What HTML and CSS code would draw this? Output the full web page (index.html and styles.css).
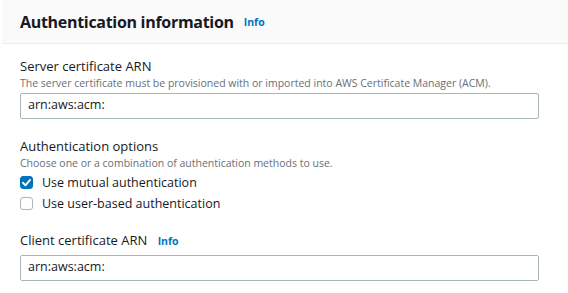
FILE: index.html
```html
<!DOCTYPE html>
<html>
<head>
<meta charset="utf-8">
<link rel="stylesheet" href="styles.css">
</head>
<body>
<div class="panel">
  <div class="header">
    <h2 class="title">Authentication information</h2>
    <a class="info">Info</a>
  </div>
  <div class="content">
    <div class="field">
      <div class="label">Server certificate ARN</div>
      <div class="desc">The server certificate must be provisioned with or imported into AWS Certificate Manager (ACM).</div>
      <div class="input">arn:aws:acm:</div>
    </div>
    <div class="field opts">
      <div class="label">Authentication options</div>
      <div class="desc">Choose one or a combination of authentication methods to use.</div>
      <div class="checks">
        <div class="check">
          <span class="box checked"><svg viewBox="0 0 14 14" width="14" height="14"><path d="M3.2 7.3 L5.9 10 L10.8 4.2" fill="none" stroke="#fff" stroke-width="2" stroke-linecap="round" stroke-linejoin="round"/></svg></span>
          <span class="clabel">Use mutual authentication</span>
        </div>
        <div class="check">
          <span class="box"></span>
          <span class="clabel">Use user-based authentication</span>
        </div>
      </div>
    </div>
    <div class="field client">
      <div class="label">Client certificate ARN <a class="info">Info</a></div>
      <div class="input">arn:aws:acm:</div>
    </div>
  </div>
</div>
</body>
</html>
```
FILE: styles.css
```css
html, body { margin: 0; padding: 0; background: #fff; }
body { font-family: "Open Sans", "Liberation Sans", sans-serif; color: #16191f; }
.panel { margin-left: 2px; width: 566px; }
.header {
  background: #fafafa;
  border-bottom: 1px solid #eaeded;
  height: 44px;
  box-sizing: border-box;
  display: flex;
  align-items: center;
  padding-left: 18px;
  padding-top: 1px;
}
.title { margin: 0; font-size: 16px; font-weight: 700; color: #16191f; letter-spacing: -0.3px; }
.info { color: #0073bb; font-size: 10.5px; font-weight: 700; margin-left: 10px; }
.content { padding: 13px 0 0 18px; }
.field { display: flex; flex-direction: column; }
.label { font-size: 13px; line-height: 18px; }
.desc { font-size: 10.5px; line-height: 14px; color: #687078; margin-top: 1px; }
.input {
  margin-top: 3px;
  width: 519px;
  height: 26px;
  box-sizing: border-box;
  border: 1px solid #aab7b8;
  border-radius: 2px;
  font-size: 12.5px;
  line-height: 22px;
  padding-left: 7px;
}
.opts { margin-top: 18px; }
.checks { margin-top: 2px; display: flex; flex-direction: column; }
.check { display: flex; align-items: center; height: 21px; }
.box {
  width: 13px; height: 13px; box-sizing: border-box;
  border: 1px solid #aab7b8; border-radius: 3px; background: #fff;
  margin-right: 9px; display: inline-flex;
}
.box.checked { background: #0073bb; border-color: #0073bb; }
.box.checked svg { margin: -1px; width: 13px; height: 13px; }
.clabel { font-size: 12.5px; }
.client { margin-top: 17px; }
.client .input { margin-top: 5px; }
.client .info { margin-left: 7px; }
```
